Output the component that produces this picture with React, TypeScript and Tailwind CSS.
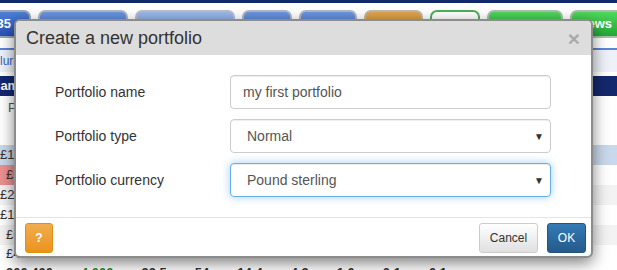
const tabs = [
  { w: "w-[72px]", cls: "bg-gradient-to-b from-[#4f7fd6] to-[#2553b8] border-[#9aa6bd]", label: "35", pr: "pr-[18px]" },
  { w: "w-[90px]", cls: "bg-gradient-to-b from-[#6a95e0] to-[#3f72cf] border-[#b0b7c4]", label: "", pr: "pr-[6px]" },
  { w: "w-[100px]", cls: "bg-gradient-to-b from-[#9ab8ea] to-[#7fa2e0] border-[#b8bfcc]", label: "", pr: "pr-[6px]" },
  { w: "w-[50px]", cls: "bg-gradient-to-b from-[#6a95e0] to-[#3f72cf] border-[#b0b7c4]", label: "", pr: "pr-[6px]" },
  { w: "w-[58px]", cls: "bg-gradient-to-b from-[#6a95e0] to-[#3f72cf] border-[#b0b7c4]", label: "", pr: "pr-[6px]" },
  { w: "w-[59px]", cls: "bg-gradient-to-b from-[#e0a450] to-[#c98a2c] border-[#c0b8a8]", label: "", pr: "pr-[6px]" },
  { w: "w-[50px]", cls: "bg-white border-[#4cae5a]", label: "", pr: "pr-[6px]" },
  { w: "w-[76px]", cls: "bg-gradient-to-b from-[#4fd65e] to-[#20a834] border-[#a8c0aa]", label: "", pr: "pr-[6px]" },
  { w: "w-[71px]", cls: "bg-gradient-to-b from-[#4fd65e] to-[#20a834] border-[#a8c0aa]", label: "News", pr: "pr-[27px]" },
];

const rows = [
  { bg: "bg-[#c9d8ea]", cell: "bg-[#c9d8ea]", text: "£1,250", pad: "pl-0", h: "h-[20px]" },
  { bg: "bg-white", cell: "bg-[#ee8f8f]", text: "£980", pad: "pl-[6px]", h: "h-[20px]" },
  { bg: "bg-[#f3f3f3]", cell: "bg-[#f3f3f3]", text: "£2,310", pad: "pl-0", h: "h-[20px]" },
  { bg: "bg-white", cell: "bg-white", text: "£1,020", pad: "pl-0", h: "h-[20px]" },
  { bg: "bg-[#f3f3f3]", cell: "bg-[#f3f3f3]", text: "£640", pad: "pl-[6px]", h: "h-[20px]" },
  { bg: "bg-white", cell: "bg-white", text: "£415", pad: "pl-[6px]", h: "h-[17px]" },
];

function Field({ label, value, kind }: { label: string; value: string; kind: "input" | "select" | "focus" }) {
  const box =
    kind === "focus"
      ? "border-[#66afe9] shadow-[inset_0_1px_1px_rgba(0,0,0,0.075),0_0_8px_rgba(102,175,233,0.6)]"
      : "border-[#cccccc] shadow-[inset_0_1px_1px_rgba(0,0,0,0.075)]";
  return (
    <div className="flex items-center">
      <div className="w-[175px] text-[14px] text-[#333]">{label}</div>
      <div className={`flex h-[34px] w-[321px] items-center justify-between rounded-[4px] border bg-white ${box} ${kind === "input" ? "pl-[12px]" : "pl-[16px]"} pr-[6px]`}>
        <span className="text-[14px] text-[#555]">{value}</span>
        {kind !== "input" && <span className="text-[10px] text-[#333]">▼</span>}
      </div>
    </div>
  );
}

export default function App() {
  return (
    <div className="relative h-[270px] w-[617px] overflow-hidden bg-white font-['Liberation_Sans',Arial,sans-serif]">
      {/* page behind the dialog */}
      <div className="h-[3px] bg-[#13286b]" />
      <div className="h-[7px]" />
      <div className="ml-[-41px] flex h-[28px] gap-[7px]">
        {tabs.map((t, i) => (
          <div
            key={i}
            className={`${t.w} ${t.cls} ${t.pr} flex shrink-0 items-center justify-end rounded-t-[7px] border-2 text-[13px] font-bold text-white`}
          >
            {t.label}
          </div>
        ))}
      </div>
      <div className="h-[10px]" />
      <div className="h-[2px] bg-[#5b86d8]" />
      <div className="flex h-[22px] items-center bg-[#eef2f8] text-[12px] text-[#3a67c0]">
        <span className="ml-[-8px]">Blurb</span>
      </div>
      <div className="h-[4px]" />
      <div className="flex h-[20px] items-center bg-[#14286e] text-[13px] font-bold text-white">
        <span className="ml-[-9px]">Name</span>
      </div>
      <div className="h-[49px] pl-[8px] pt-[2px] text-[13px] text-[#555]">Price</div>
      {rows.map((r, i) => (
        <div key={i} className={`flex ${r.h} items-center ${r.bg}`}>
          <div className={`flex h-full w-[40px] items-center ${r.cell} ${r.pad} text-[13px] text-[#333]`}>{r.text}</div>
        </div>
      ))}
      <div className="flex gap-[28px] pl-[6px] pt-[3px] text-[13px] font-bold leading-[16px] text-[#333]">
        <span>300,400</span>
        <span className="text-[#2a8a2a]">4,000</span>
        <span>33.5</span>
        <span>54</span>
        <span>14.4</span>
        <span>4.3</span>
        <span>1.0</span>
        <span>0.1</span>
        <span>0.1</span>
      </div>

      {/* modal dialog */}
      <div className="absolute left-[14px] top-[19px] w-[579px] overflow-hidden rounded-[6px] border-2 border-[#8c8c8c] bg-white shadow-[0_5px_15px_rgba(0,0,0,0.5)]">
        <div className="flex h-[34px] items-center justify-between bg-[#dddddd] pl-[10px] pr-[11px]">
          <span className="text-[18px] text-[#333]">Create a new portfolio</span>
          <span className="text-[21px] font-bold leading-none text-[#aaaaaa]">×</span>
        </div>
        <div className="flex h-[162px] flex-col gap-[10px] pl-[39px] pt-[20px]">
          <Field label="Portfolio name" value="my first portfolio" kind="input" />
          <Field label="Portfolio type" value="Normal" kind="select" />
          <Field label="Portfolio currency" value="Pound sterling" kind="focus" />
        </div>
        <div className="flex h-[39px] items-center justify-between border-t border-[#e5e5e5] pl-[9px] pr-[5px] pt-[2px]">
          <button className="flex h-[30px] w-[28px] items-center justify-center rounded-[3px] border border-[#e38d13] bg-gradient-to-b from-[#f0ad4e] to-[#eb9316] text-[12px] font-bold text-white">
            ?
          </button>
          <div className="flex gap-[9px]">
            <button className="h-[30px] w-[59px] rounded-[3px] border border-[#cccccc] bg-gradient-to-b from-white to-[#e0e0e0] text-[12px] text-[#333]">
              Cancel
            </button>
            <button className="h-[30px] w-[39px] rounded-[3px] border border-[#245580] bg-gradient-to-b from-[#337ab7] to-[#265a88] text-[12px] text-white">
              OK
            </button>
          </div>
        </div>
      </div>
    </div>
  );
}
